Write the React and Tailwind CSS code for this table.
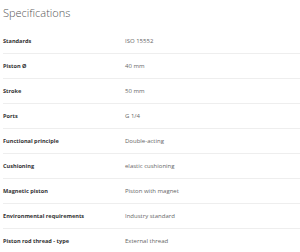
const specs = [
  ['Standards', 'ISO 15552'],
  ['Piston Ø', '40 mm'],
  ['Stroke', '50 mm'],
  ['Ports', 'G 1/4'],
  ['Functional principle', 'Double-acting'],
  ['Cushioning', 'elastic cushioning'],
  ['Magnetic piston', 'Piston with magnet'],
  ['Environmental requirements', 'Industry standard'],
  ['Piston rod thread - type', 'External thread'],
];

export default function App() {
  return (
    <div className="w-[300px] h-[252px] overflow-hidden bg-white pl-[3px] font-['Open_Sans',sans-serif]">
      <h2 className="h-[29px] pt-[5px] text-[11px] leading-[16px] font-light text-[#555]">
        Specifications
      </h2>
      <div>
        {specs.map(([label, value]) => (
          <div key={label} className="flex items-center h-[25px] border-b border-[#eeeeee]">
            <div className="w-[122px] text-[5.6px] font-bold text-[#333]">{label}</div>
            <div className="text-[6px] text-[#666]">{value}</div>
          </div>
        ))}
      </div>
    </div>
  );
}
